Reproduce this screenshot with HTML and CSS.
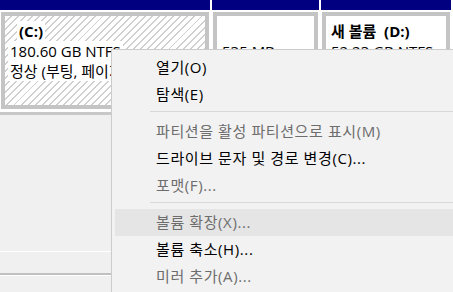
FILE: index.html
```html
<!DOCTYPE html>
<html lang="ko">
<head>
    <meta charset="UTF-8">
    <title>디스크 관리</title>
    <link rel="stylesheet" href="styles.css">
</head>
<body>

    <!-- Disk 0 partitions -->
    <div class="disk">
        <div class="part part-c">
            <div class="bar"></div>
            <div class="frame">
                <div class="inner hatch">
                    <div class="line name name-c">(C:)</div>
                    <div class="line">180.60 GB NTFS</div>
                    <div class="line">정상 (부팅, 페이지 파일, 크래시 덤프, 주 파티션)</div>
                </div>
            </div>
        </div>
        <div class="part part-r">
            <div class="bar"></div>
            <div class="frame">
                <div class="inner">
                    <div class="line empty"></div>
                    <div class="line">535 MB</div>
                    <div class="line">정상 (복구 파티션)</div>
                </div>
            </div>
        </div>
        <div class="part part-d">
            <div class="bar"></div>
            <div class="frame">
                <div class="inner">
                    <div class="line name">새 볼륨&nbsp;&nbsp;(D:)</div>
                    <div class="line">52.23 GB NTFS</div>
                    <div class="line">정상 (주 파티션)</div>
                </div>
            </div>
        </div>
    </div>

    <!-- Next disk row edges -->
    <div class="lower">
        <div class="rule-a"></div>
        <div class="rule-b"></div>
    </div>

    <!-- Context menu -->
    <ul class="menu">
        <li class="item">열기(O)</li>
        <li class="item">탐색(E)</li>
        <li class="sep"></li>
        <li class="item off">파티션을 활성 파티션으로 표시(M)</li>
        <li class="item">드라이브 문자 및 경로 변경(C)...</li>
        <li class="item off">포맷(F)...</li>
        <li class="sep"></li>
        <li class="item off hover">볼륨 확장(X)...</li>
        <li class="item">볼륨 축소(H)...</li>
        <li class="item off">미러 추가(A)...</li>
    </ul>

</body>
</html>
```

FILE: styles.css
```css
/* General */
body {
    margin: 0;
    background: #f0f0f0;
    font-family: 'Open Sans', 'Noto Sans CJK KR', sans-serif;
    font-size: 15px;
    overflow: hidden;
}

/* Disk row */
.disk {
    display: flex;
    gap: 2px;
    background: #fff;
    border-bottom: 3px solid #c8c8c8;
}

.part {
    display: flex;
    flex-direction: column;
}

.part-c { width: 210px; }
.part-r { width: 107px; }
.part-d { width: 130px; }

.bar {
    height: 10px;
    background: #000080;
}

.frame {
    margin: 2px 1px 3px 1px;
    border: 4px solid #c4c4c4;
}

.inner {
    height: 89px;
    padding: 5px 0 0 3px;
    box-sizing: border-box;
    background: #fff;
    overflow: hidden;
    white-space: nowrap;
}

.hatch {
    background: repeating-linear-gradient(135deg, #fff 0, #fff 3.6px, #cfcfcf 3.6px, #cfcfcf 5px);
}

.line {
    width: fit-content;
    height: 20px;
    line-height: 20px;
    padding: 0 2px;
    background: #fff;
    color: #000;
}

.line.empty { background: none; }

.name { font-weight: bold; }
.name-c { margin-left: 9px; }

/* Lower pane */
.lower {
    padding-top: 136px;
}

.rule-a {
    height: 1px;
    background: #fff;
}

.rule-b {
    margin-top: 21px;
    height: 2px;
    background: #c0c0c0;
    border-bottom: 1px solid #fff;
}

/* Context menu */
.menu {
    position: absolute;
    left: 111px;
    top: 49px;
    width: 338px;
    margin: 0;
    padding: 4px 3px 4px 3px;
    list-style: none;
    background: #f2f2f2;
    border: 1px solid #cccccc;
}

.item {
    height: 27px;
    line-height: 27px;
    padding-left: 41px;
    color: #000;
    letter-spacing: 0.6px;
    white-space: nowrap;
}

.item.off { color: #6d6d6d; }
.item.hover { background: #e5e5e5; }

.sep {
    height: 1px;
    margin: 3px 0 6px 35px;
    background: #d7d7d7;
}
```
